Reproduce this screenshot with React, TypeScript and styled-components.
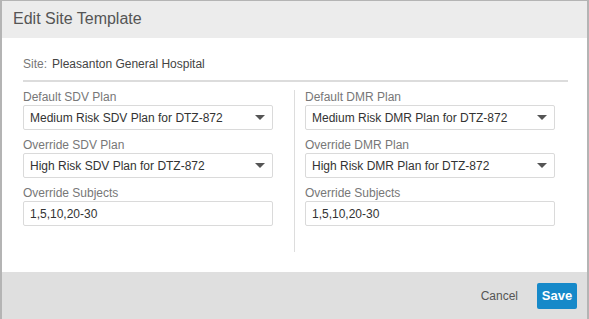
import React from "react"
import styled, { createGlobalStyle } from "styled-components"

const GlobalStyle = createGlobalStyle`
  html, body {
    margin: 0;
    padding: 0;
    background: #ffffff;
  }
  body {
    font-family: "Liberation Sans", Arial, sans-serif;
  }
`

interface PlanField {
  label: string
  value: string
  select: boolean
}

const leftFields: PlanField[] = [
  { label: "Default SDV Plan", value: "Medium Risk SDV Plan for DTZ-872", select: true },
  { label: "Override SDV Plan", value: "High Risk SDV Plan for DTZ-872", select: true },
  { label: "Override Subjects", value: "1,5,10,20-30", select: false },
]

const rightFields: PlanField[] = [
  { label: "Default DMR Plan", value: "Medium Risk DMR Plan for DTZ-872", select: true },
  { label: "Override DMR Plan", value: "High Risk DMR Plan for DTZ-872", select: true },
  { label: "Override Subjects", value: "1,5,10,20-30", select: false },
]

const Field = ({ label, value, select }: PlanField) => (
  <FieldGroup>
    <FieldLabel>{label}</FieldLabel>
    <InputBox>
      <InputText>{value}</InputText>
      {select && <Caret />}
    </InputBox>
  </FieldGroup>
)

export default function App() {
  return (
    <>
      <GlobalStyle />
      <Modal>
        <ModalHeader>Edit Site Template</ModalHeader>
        <ModalBody>
          <SiteRow>
            <SiteLabel>Site:</SiteLabel>
            <SiteName>Pleasanton General Hospital</SiteName>
          </SiteRow>
          <Columns>
            <Column>
              {leftFields.map((f) => (
                <Field key={f.label} {...f} />
              ))}
            </Column>
            <Column divided>
              {rightFields.map((f) => (
                <Field key={f.label} {...f} />
              ))}
            </Column>
          </Columns>
        </ModalBody>
        <ModalFooter>
          <CancelButton>Cancel</CancelButton>
          <SaveButton>Save</SaveButton>
        </ModalFooter>
      </Modal>
    </>
  )
}

const Modal = styled.div`
  width: 589px;
  height: 319px;
  box-sizing: border-box;
  border-top: 1px solid #b4b4b4;
  border-left: 2px solid #b4b4b4;
  border-right: 2px solid #b4b4b4;
  display: flex;
  flex-direction: column;
  overflow: hidden;
  background: #ffffff;
`

const ModalHeader = styled.div`
  height: 37px;
  line-height: 35px;
  padding-left: 11px;
  background: #ececec;
  color: #555555;
  font-size: 16px;
`

const ModalBody = styled.div`
  flex: 1;
  padding: 18px 19px 0 21px;
`

const SiteRow = styled.div`
  display: flex;
  gap: 5px;
  height: 24px;
  line-height: 16px;
  font-size: 12px;
  border-bottom: 2px solid #dcdcdc;
`

const SiteLabel = styled.span`
  color: #777777;
`

const SiteName = styled.span`
  color: #444444;
`

const Columns = styled.div`
  display: flex;
  padding-top: 8px;
`

const Column = styled.div<{ divided?: boolean }>`
  box-sizing: border-box;
  width: ${(p) => (p.divided ? "263px" : "271px")};
  padding: ${(p) => (p.divided ? "0 0 26px 10px" : "0 21px 26px 0")};
  border-left: ${(p) => (p.divided ? "1px solid #dddddd" : "none")};
  display: flex;
  flex-direction: column;
  gap: 8px;
`

const FieldGroup = styled.div`
  display: flex;
  flex-direction: column;
`

const FieldLabel = styled.div`
  color: #777777;
  font-size: 12px;
  line-height: 15px;
`

const InputBox = styled.div`
  box-sizing: border-box;
  height: 25px;
  width: 250px;
  border: 1px solid #dadada;
  border-radius: 2px;
  display: flex;
  align-items: center;
  justify-content: space-between;
  padding: 0 7px 0 6px;
`

const InputText = styled.span`
  color: #333333;
  font-size: 12px;
`

const Caret = styled.span`
  width: 0;
  height: 0;
  border-left: 5px solid transparent;
  border-right: 5px solid transparent;
  border-top: 5px solid #555555;
`

const ModalFooter = styled.div`
  height: 47px;
  background: #dfdfdf;
  display: flex;
  align-items: center;
  justify-content: flex-end;
  gap: 19px;
  padding: 0 10px 0 0;
`

const CancelButton = styled.span`
  color: #555555;
  font-size: 12px;
`

const SaveButton = styled.div`
  width: 40px;
  height: 26px;
  box-sizing: border-box;
  background: #1689c9;
  border-radius: 2px;
  color: #ffffff;
  font-size: 13px;
  font-weight: bold;
  display: flex;
  align-items: center;
  justify-content: center;
`
